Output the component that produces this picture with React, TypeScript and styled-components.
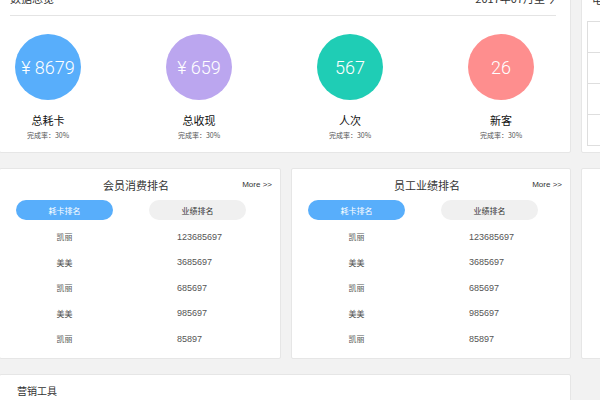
import { createGlobalStyle } from 'styled-components';
import styled from 'styled-components';

const GlobalStyle = createGlobalStyle`
  html, body {
    margin: 0;
    padding: 0;
    background: #f2f2f2;
    overflow: hidden;
  }
  body {
    font-family: "Noto Sans CJK SC", "Noto Sans", sans-serif;
    color: #333;
  }
`;

// ---------------------------------------------
// data
// ---------------------------------------------
const stats = [
  { value: '¥ 8679', label: '总耗卡', color: '#58aefb' },
  { value: '¥ 659', label: '总收现', color: '#bba6ef' },
  { value: '567', label: '人次', color: '#1fcdb5' },
  { value: '26', label: '新客', color: '#fe8e8e' },
];

const ranking = [
  { name: '凯丽', amount: '123685697' },
  { name: '美美', amount: '3685697' },
  { name: '凯丽', amount: '685697' },
  { name: '美美', amount: '985697' },
  { name: '凯丽', amount: '85897' },
];

// ---------------------------------------------
// layout
// ---------------------------------------------
const Dashboard = styled.div`
  display: grid;
  grid-template-columns: 282px 280px 200px;
  grid-template-rows: 173px 191px 80px;
  column-gap: 10px;
  row-gap: 15px;
  margin-top: -20px;
  margin-left: -1px;
`;

const Card = styled.section<{ $span?: boolean }>`
  box-sizing: border-box;
  background: #fff;
  border: 1px solid #e6e6e6;
  border-radius: 2px;
  overflow: hidden;
  grid-column: ${({ $span }) => ($span ? '1 / 3' : 'auto')};
`;

// ---------------------------------------------
// overview
// ---------------------------------------------
const Overview = styled(Card)`
  padding: 0 14px 0 10px;
`;

const OverviewHeader = styled.header`
  height: 34px;
  display: flex;
  align-items: center;
  justify-content: space-between;
  border-bottom: 1px solid #e4e4e4;
  font-size: 11px;
  color: #333;
`;

const StatRow = styled.div`
  display: flex;
  gap: 85px;
  padding: 18px 0 0 5px;
`;

const Stat = styled.div`
  width: 66px;
  display: flex;
  flex-direction: column;
  align-items: center;
`;

const Bubble = styled.div<{ $color: string }>`
  width: 66px;
  height: 66px;
  border-radius: 50%;
  background: ${({ $color }) => $color};
  display: flex;
  align-items: center;
  justify-content: center;
  color: #fff;
  font-family: Roboto, "Noto Sans", sans-serif;
  font-weight: 300;
  font-size: 18px;
  white-space: pre;
`;

const StatLabel = styled.div`
  margin-top: 12px;
  font-size: 11px;
  line-height: 16px;
  color: #111;
  white-space: nowrap;
`;

const StatRate = styled.div`
  margin-top: 2px;
  font-size: 7px;
  line-height: 10px;
  color: #555;
  white-space: nowrap;
`;

// ---------------------------------------------
// side table
// ---------------------------------------------
const SideCard = styled(Card)`
  padding-left: 5px;
`;

const SideTitle = styled.div`
  height: 36px;
  display: flex;
  align-items: center;
  padding-left: 5px;
  font-size: 11px;
  color: #333;
  white-space: nowrap;
`;

const SideTable = styled.div`
  margin-top: 4px;
  border-left: 1px solid #dedede;
  border-top: 1px solid #dedede;
`;

const SideRow = styled.div`
  height: 30px;
  border-bottom: 1px solid #dedede;
`;

// ---------------------------------------------
// ranking
// ---------------------------------------------
const RankHeader = styled.header`
  height: 31px;
  display: grid;
  grid-template-columns: 1fr auto 1fr;
  align-items: center;
  padding-right: 8px;
`;

const RankTitle = styled.h3`
  margin: 0;
  font-size: 11px;
  font-weight: 400;
  color: #333;
`;

const More = styled.span`
  justify-self: end;
  font-family: "Liberation Sans", sans-serif;
  font-size: 8px;
  color: #333;
`;

const Columns = styled.div`
  display: grid;
  grid-template-columns: 97px 97px;
  column-gap: 36px;
  padding-left: 16px;
`;

const Tab = styled.div<{ $active?: boolean }>`
  height: 20px;
  border-radius: 10px;
  display: flex;
  align-items: center;
  justify-content: center;
  font-size: 8px;
  background: ${({ $active }) => ($active ? '#58aefb' : '#f0f0f0')};
  color: ${({ $active }) => ($active ? '#fff' : '#333')};
`;

const RankList = styled.div`
  padding-top: 4px;
`;

const RankRow = styled(Columns)`
  height: 25.5px;
  align-items: center;
  font-size: 8px;
  color: #555;
`;

const Name = styled.span`
  text-align: center;
`;

const Amount = styled.span`
  padding-left: 28px;
  font-family: "Liberation Sans", sans-serif;
  font-size: 9px;
`;

// ---------------------------------------------
// tools
// ---------------------------------------------
const Tools = styled(Card)`
  padding: 9px 17px;
`;

const ToolsTitle = styled.h3`
  margin: 0;
  font-size: 10px;
  line-height: 14px;
  font-weight: 400;
  color: #333;
`;

function RankingCard({ title }: { title: string }) {
  return (
    <Card>
      <RankHeader>
        <span />
        <RankTitle>{title}</RankTitle>
        <More>More &gt;&gt;</More>
      </RankHeader>
      <Columns>
        <Tab $active>耗卡排名</Tab>
        <Tab>业绩排名</Tab>
      </Columns>
      <RankList>
        {ranking.map(({ name, amount }, i) => (
          <RankRow key={'rank-' + i}>
            <Name>{name}</Name>
            <Amount>{amount}</Amount>
          </RankRow>
        ))}
      </RankList>
    </Card>
  );
}

export default function App() {
  return (
    <>
      <GlobalStyle />
      <Dashboard>
        <Overview $span>
          <OverviewHeader>
            <span>数据总览</span>
            <span>2017年07月至今</span>
          </OverviewHeader>
          <StatRow>
            {stats.map(({ value, label, color }) => (
              <Stat key={label}>
                <Bubble $color={color}>{value}</Bubble>
                <StatLabel>{label}</StatLabel>
                <StatRate>完成率：30%</StatRate>
              </Stat>
            ))}
          </StatRow>
        </Overview>

        <SideCard>
          <SideTitle>电子会员卡</SideTitle>
          <SideTable>
            {[0, 1, 2, 3].map((i) => (
              <SideRow key={'side-' + i} />
            ))}
          </SideTable>
        </SideCard>

        <RankingCard title="会员消费排名" />
        <RankingCard title="员工业绩排名" />
        <Card />

        <Tools $span>
          <ToolsTitle>营销工具</ToolsTitle>
        </Tools>
      </Dashboard>
    </>
  );
}
